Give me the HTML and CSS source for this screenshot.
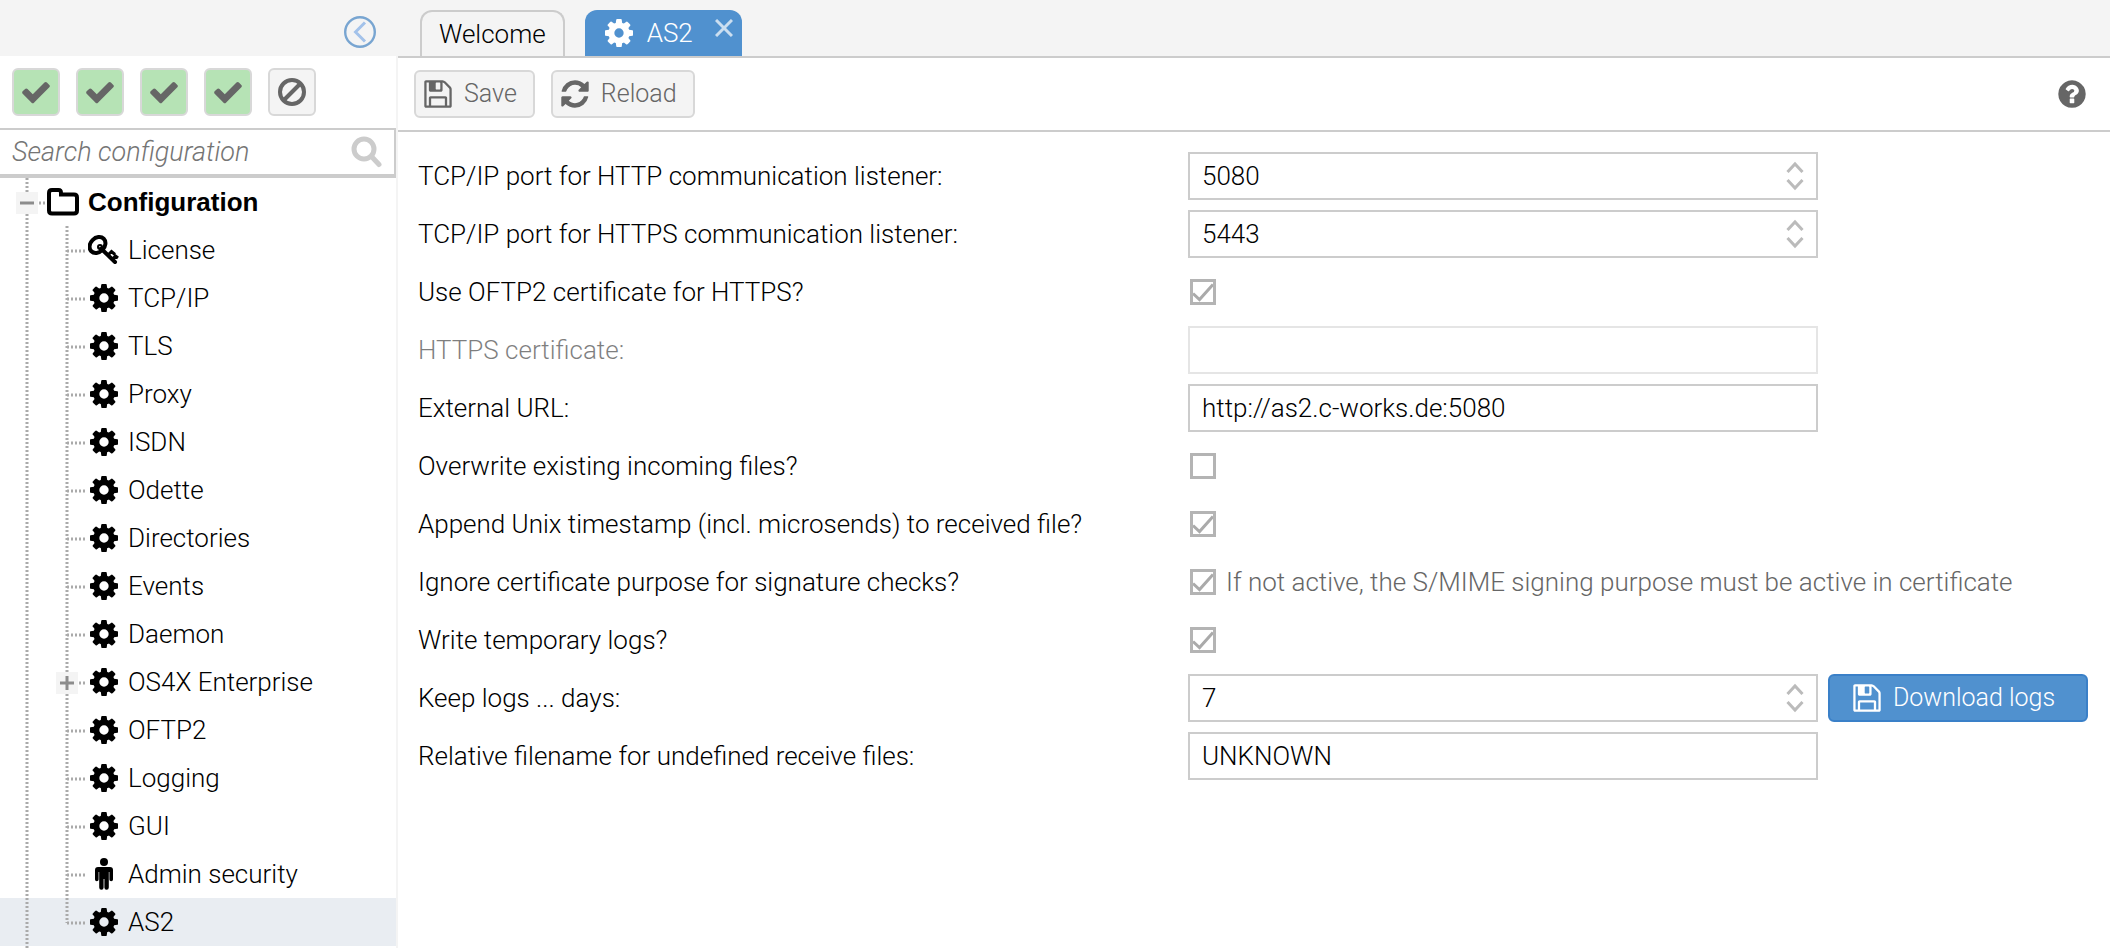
FILE: index.html
```html
<!DOCTYPE html>
<html lang="en">
<head>
<meta charset="utf-8">
<title>Configuration - AS2</title>
<link rel="stylesheet" href="styles.css">
</head>
<body>
<svg class="sprite" aria-hidden="true">
  <symbol id="gear" viewBox="0 -128 1536 1536"><path d="M1024 640q0-106-75-181t-181-75-181 75-75 181 75 181 181 75 181-75 75-181zm512-109v222q0 12-8 23t-20 13l-185 28q-19 54-39 91 35 50 107 138 10 12 10 25t-9 23q-27 37-99 108t-94 71q-12 0-26-9l-138-108q-44 23-91 38-16 136-29 186-7 28-36 28h-222q-14 0-24.500-8.500t-11.500-21.500l-28-184q-49-16-90-37l-141 107q-10 9-25 9-14 0-25-11-126-114-165-168-7-10-7-23 0-12 8-23 15-21 51-66.500t54-70.500q-27-50-41-99l-183-27q-13-2-21-12.500t-8-23.500v-222q0-12 8-23t19-13l186-28q14-46 39-92-40-57-107-138-10-12-10-24 0-10 9-23 26-36 98.500-107.500t94.500-71.500q13 0 26 10l138 107q44-23 91-38 16-136 29-186 7-28 36-28h222q14 0 24.500 8.500t11.500 21.500l28 184q49 16 90 37l142-107q9-9 24-9 13 0 25 10 129 119 165 170 7 8 7 22 0 12-8 23-15 21-51 66.500t-54 70.500q26 50 41 98l183 28q13 2 21 12.500t8 23.500z"/></symbol>
  <symbol id="check" viewBox="0 0 1792 1792"><path d="M1671 566q0 40-28 68l-724 724-136 136q-28 28-68 28t-68-28l-136-136-362-362q-28-28-28-68t28-68l136-136q28-28 68-28t68 28l294 295 656-657q28-28 68-28t68 28l136 136q28 28 28 68z"/></symbol>
  <symbol id="ban" viewBox="0 0 32 32"><g fill="none" stroke="currentColor" stroke-width="4"><circle cx="16" cy="16" r="12"/><path d="M24.500 7.500l-17 17"/></g></symbol>
  <symbol id="refresh" viewBox="0 0 1792 1792"><path d="M1639 1056q0 5-1 7-64 268-268 434.500t-478 166.500q-146 0-282.500-55t-243.500-157l-129 129q-19 19-45 19t-45-19-19-45v-448q0-26 19-45t45-19h448q26 0 45 19t19 45-19 45l-137 137q71 66 161 102t187 36q134 0 250-65t186-179q11-17 53-117 8-23 30-23h192q13 0 22.500 9.500t9.500 22.500zm25-800v448q0 26-19 45t-45 19h-448q-26 0-45-19t-19-45 19-45l138-138q-148-137-349-137-134 0-250 65t-186 179q-11 17-53 117-8 23-30 23h-199q-13 0-22.500-9.500t-9.500-22.500v-7q65-268 270-434.500t480-166.500q146 0 284 55.500t245 156.500l130-129q19-19 45-19t45 19 19 45z"/></symbol>
  <symbol id="floppy" viewBox="0 0 1792 1792"><path d="M512 1536h768v-384h-768v384zm896 0h128v-896q0-14-10-38.500t-20-34.500l-281-281q-10-10-34-20t-39-10v416q0 40-28 68t-68 28h-576q-40 0-68-28t-28-68v-416h-128v1280h128v-416q0-40 28-68t68-28h832q40 0 68 28t28 68v416zm-384-928v-320q0-13-9.500-22.500t-22.500-9.500h-192q-13 0-22.500 9.500t-9.500 22.500v320q0 13 9.500 22.500t22.500 9.500h192q13 0 22.500-9.500t9.500-22.500zm640 32v928q0 40-28 68t-68 28h-1344q-40 0-68-28t-28-68v-1344q0-40 28-68t68-28h928q40 0 88 20t76 48l280 280q28 28 48 76t20 88z"/></symbol>
  <symbol id="help" viewBox="0 0 1792 1792"><path d="M1024 1376v-192q0-14-9-23t-23-9h-192q-14 0-23 9t-9 23v192q0 14 9 23t23 9h192q14 0 23-9t9-23zm256-672q0-88-55.500-163t-138.500-116-170-41q-243 0-371 213-15 24 8 42l132 100q7 6 19 6 16 0 25-12 53-68 86-92 34-24 86-24 48 0 85.500 26t37.500 59q0 38-20 61t-68 45q-63 28-115.500 86.500t-52.500 125.500v36q0 14 9 23t23 9h192q14 0 23-9t9-23q0-19 21.500-49.500t54.500-49.500q32-18 49-28.500t46-35 44.500-48 28-60.500 12.500-81zm384 192q0 209-103 385.500t-279.500 279.500-385.500 103-385.500-103-279.500-279.500-103-385.500 103-385.500 279.500-279.500 385.500-103 385.500 103 279.500 279.500 103 385.500z"/></symbol>
  <symbol id="search" viewBox="0 0 32 32"><g fill="none" stroke="currentColor" stroke-width="5" stroke-linecap="round"><circle cx="14" cy="13" r="10"/><path d="M22 21l7 7.500"/></g></symbol>
  <symbol id="folder" viewBox="0 0 32 28"><path d="M2 5Q2 2 5 2h6.500Q14 2 14 5v1.500h13Q30 6.500 30 9.500v13Q30 25.500 27 25.500H5Q2 25.500 2 22.500z" fill="none" stroke="currentColor" stroke-width="4"/></symbol>
  <symbol id="key" viewBox="2 1 32 32"><g fill="none" stroke="currentColor"><ellipse cx="11.500" cy="12" rx="8.800" ry="7" stroke-width="4" transform="rotate(-45 11.500 12)"/><circle cx="14" cy="14" r="2" stroke-width="2"/><path d="M15 15.500L29 29" stroke-width="4" stroke-linecap="round"/><path d="M22 22l3.500-3.500 3.500 3M26.500 26l3-3 2.500 2" stroke-width="3"/></g></symbol>
  <symbol id="male" viewBox="0 0 32 32"><circle cx="16" cy="4" r="4"/><path d="M10 9h12q3 0 3 3v9.500a1.800 1.800 0 0 1-3.600 0V14h-.6v15.500a2.200 2.200 0 0 1-4.400 0V21h-.8v8.500a2.200 2.200 0 0 1-4.400 0V14h-.6v7.500a1.800 1.800 0 0 1-3.600 0V12q0-3 3-3z"/></symbol>
  <symbol id="collapse" viewBox="0 0 32 32"><g fill="none"><circle cx="16" cy="16" r="14.800" stroke="#78a5d1" stroke-width="2.400"/><path d="M21 6.500L11.500 16l9.500 9.500" stroke="#a3c2ea" stroke-width="3"/></g></symbol>
  <symbol id="close" viewBox="0 0 18 18"><path d="M1 1l16 16M17 1L1 17" stroke="currentColor" stroke-width="3"/></symbol>
  <symbol id="up" viewBox="0 0 18 12"><path d="M1.500 11L9 3l7.500 8" fill="none" stroke="currentColor" stroke-width="3"/></symbol>
  <symbol id="down" viewBox="0 0 18 12"><path d="M1.500 1L9 9l7.500-8" fill="none" stroke="currentColor" stroke-width="3"/></symbol>
  <symbol id="g-line" viewBox="0 0 40 48"><path class="dots" d="M20 0v48"/></symbol>
  <symbol id="g-tee" viewBox="0 0 40 48"><path class="dots" d="M20 0v48M20 25h18"/></symbol>
  <symbol id="g-end" viewBox="0 0 40 48"><path class="dots" d="M20 0v25M20 25h18"/></symbol>
  <symbol id="g-minus" viewBox="0 0 40 48"><path class="dots" d="M20 0v48M20 25h18"/><path d="M9 14h22v22H9z" fill="#f4f4f4"/><path d="M13 25h14" stroke="#8c8c8c" stroke-width="3"/></symbol>
  <symbol id="g-plus" viewBox="0 0 40 48"><path class="dots" d="M20 0v48M20 25h18"/><path d="M9 14h22v22H9z" fill="#f4f4f4"/><path d="M13 25h14M20 18v14" stroke="#8c8c8c" stroke-width="3"/></symbol>
</svg>
<div class="app">
  <aside class="sidebar">
    <header class="side-head"><button class="plain" aria-label="Collapse"><svg class="i32"><use href="#collapse"/></svg></button></header>
    <div class="status">
      <button class="btn square ok" aria-label="Status 1"><svg class="i32"><use href="#check"/></svg></button>
      <button class="btn square ok" aria-label="Status 2"><svg class="i32"><use href="#check"/></svg></button>
      <button class="btn square ok" aria-label="Status 3"><svg class="i32"><use href="#check"/></svg></button>
      <button class="btn square ok" aria-label="Status 4"><svg class="i32"><use href="#check"/></svg></button>
      <button class="btn square" aria-label="Stop"><svg class="i32"><use href="#ban"/></svg></button>
    </div>
    <div class="search"><input type="text" placeholder="Search configuration" aria-label="Search configuration"><svg class="i32"><use href="#search"/></svg></div>
    <nav class="tree">
      <a class="node root" href="#"><svg class="guide"><use href="#g-minus"/></svg><span class="ico"><svg class="fold"><use href="#folder"/></svg></span>Configuration</a>
      <a class="node" href="#"><svg class="guide"><use href="#g-line"/></svg><svg class="guide"><use href="#g-tee"/></svg><span class="ico"><svg class="i32"><use href="#key"/></svg></span>License</a>
      <a class="node" href="#"><svg class="guide"><use href="#g-line"/></svg><svg class="guide"><use href="#g-tee"/></svg><span class="ico"><svg class="i28"><use href="#gear"/></svg></span>TCP/IP</a>
      <a class="node" href="#"><svg class="guide"><use href="#g-line"/></svg><svg class="guide"><use href="#g-tee"/></svg><span class="ico"><svg class="i28"><use href="#gear"/></svg></span>TLS</a>
      <a class="node" href="#"><svg class="guide"><use href="#g-line"/></svg><svg class="guide"><use href="#g-tee"/></svg><span class="ico"><svg class="i28"><use href="#gear"/></svg></span>Proxy</a>
      <a class="node" href="#"><svg class="guide"><use href="#g-line"/></svg><svg class="guide"><use href="#g-tee"/></svg><span class="ico"><svg class="i28"><use href="#gear"/></svg></span>ISDN</a>
      <a class="node" href="#"><svg class="guide"><use href="#g-line"/></svg><svg class="guide"><use href="#g-tee"/></svg><span class="ico"><svg class="i28"><use href="#gear"/></svg></span>Odette</a>
      <a class="node" href="#"><svg class="guide"><use href="#g-line"/></svg><svg class="guide"><use href="#g-tee"/></svg><span class="ico"><svg class="i28"><use href="#gear"/></svg></span>Directories</a>
      <a class="node" href="#"><svg class="guide"><use href="#g-line"/></svg><svg class="guide"><use href="#g-tee"/></svg><span class="ico"><svg class="i28"><use href="#gear"/></svg></span>Events</a>
      <a class="node" href="#"><svg class="guide"><use href="#g-line"/></svg><svg class="guide"><use href="#g-tee"/></svg><span class="ico"><svg class="i28"><use href="#gear"/></svg></span>Daemon</a>
      <a class="node" href="#"><svg class="guide"><use href="#g-line"/></svg><svg class="guide"><use href="#g-plus"/></svg><span class="ico"><svg class="i28"><use href="#gear"/></svg></span>OS4X Enterprise</a>
      <a class="node" href="#"><svg class="guide"><use href="#g-line"/></svg><svg class="guide"><use href="#g-tee"/></svg><span class="ico"><svg class="i28"><use href="#gear"/></svg></span>OFTP2</a>
      <a class="node" href="#"><svg class="guide"><use href="#g-line"/></svg><svg class="guide"><use href="#g-tee"/></svg><span class="ico"><svg class="i28"><use href="#gear"/></svg></span>Logging</a>
      <a class="node" href="#"><svg class="guide"><use href="#g-line"/></svg><svg class="guide"><use href="#g-tee"/></svg><span class="ico"><svg class="i28"><use href="#gear"/></svg></span>GUI</a>
      <a class="node" href="#"><svg class="guide"><use href="#g-line"/></svg><svg class="guide"><use href="#g-tee"/></svg><span class="ico"><svg class="i32"><use href="#male"/></svg></span>Admin security</a>
      <a class="node current" href="#"><svg class="guide"><use href="#g-line"/></svg><svg class="guide"><use href="#g-end"/></svg><span class="ico"><svg class="i28"><use href="#gear"/></svg></span>AS2</a>
      <div class="node"><svg class="guide"><use href="#g-line"/></svg></div>
    </nav>
  </aside>
  <main class="main">
    <div class="tabs">
      <button class="tab">Welcome</button>
      <div class="tab active"><svg class="i28"><use href="#gear"/></svg><span>AS2</span><button class="plain close" aria-label="Close tab"><svg class="i18"><use href="#close"/></svg></button></div>
    </div>
    <div class="toolbar">
      <button class="btn"><svg class="i32"><use href="#floppy"/></svg>Save</button>
      <button class="btn"><svg class="i32"><use href="#refresh"/></svg>Reload</button>
      <button class="plain help" aria-label="Help"><svg class="i32"><use href="#help"/></svg></button>
    </div>
    <form class="form">
      <div class="row"><label for="f1">TCP/IP port for HTTP communication listener:</label><div class="field"><input id="f1" type="number" value="5080"><span class="spin"><button type="button" class="plain" aria-label="Up"><svg><use href="#up"/></svg></button><button type="button" class="plain" aria-label="Down"><svg><use href="#down"/></svg></button></span></div></div>
      <div class="row"><label for="f2">TCP/IP port for HTTPS communication listener:</label><div class="field"><input id="f2" type="number" value="5443"><span class="spin"><button type="button" class="plain" aria-label="Up"><svg><use href="#up"/></svg></button><button type="button" class="plain" aria-label="Down"><svg><use href="#down"/></svg></button></span></div></div>
      <div class="row"><label for="f3">Use OFTP2 certificate for HTTPS?</label><div class="checks"><input id="f3" type="checkbox" checked></div></div>
      <div class="row disabled"><label for="f4">HTTPS certificate:</label><div class="field"><input id="f4" type="text" disabled></div></div>
      <div class="row"><label for="f5">External URL:</label><div class="field"><input id="f5" type="text" value="http://as2.c-works.de:5080"></div></div>
      <div class="row"><label for="f6">Overwrite existing incoming files?</label><div class="checks"><input id="f6" type="checkbox"></div></div>
      <div class="row"><label for="f7">Append Unix timestamp (incl. microsends) to received file?</label><div class="checks"><input id="f7" type="checkbox" checked></div></div>
      <div class="row"><label for="f8">Ignore certificate purpose for signature checks?</label><div class="checks"><input id="f8" type="checkbox" checked><label class="hint" for="f8">If not active, the S/MIME signing purpose must be active in certificate</label></div></div>
      <div class="row"><label for="f9">Write temporary logs?</label><div class="checks"><input id="f9" type="checkbox" checked></div></div>
      <div class="row"><label for="f10">Keep logs ... days:</label><div class="field"><input id="f10" type="number" value="7"><span class="spin"><button type="button" class="plain" aria-label="Up"><svg><use href="#up"/></svg></button><button type="button" class="plain" aria-label="Down"><svg><use href="#down"/></svg></button></span></div><button type="button" class="btn primary"><svg class="i32"><use href="#floppy"/></svg>Download logs</button></div>
      <div class="row"><label for="f11">Relative filename for undefined receive files:</label><div class="field"><input id="f11" type="text" value="UNKNOWN"></div></div>
    </form>
  </main>
</div>
</body>
</html>
```
FILE: styles.css
```css
* { box-sizing: border-box; }
body { margin: 0; background: #fff; color: #000; font: 300 26px/32px Roboto, "Liberation Sans", sans-serif; }
button, input { font: inherit; color: inherit; margin: 0; }
svg { display: block; fill: currentColor; flex: none; }
.sprite { position: absolute; width: 0; height: 0; }
.i18 { width: 18px; height: 18px; }
.i28 { width: 28px; height: 28px; }
.i32 { width: 32px; height: 32px; }
.app { display: flex; height: 100vh; overflow: hidden; }
.sidebar { width: 398px; flex: none; border-right: 2px solid #f4f4f4; display: flex; flex-direction: column; }
.side-head { flex: none; height: 56px; background: #f4f4f4; display: flex; justify-content: flex-end; align-items: flex-end; padding: 0 20px 8px; }
.plain { border: 0; padding: 0; background: none; display: block; }
.status { display: flex; gap: 16px; padding: 12px; }
.btn { height: 48px; border: 2px solid #d8d8d8; border-radius: 6px; background: #f4f4f4; color: #666; display: flex; align-items: center; gap: 10px; padding: 0 16px 0 6px; font-size: 25px; }
.square { width: 48px; padding: 0; justify-content: center; }
.ok { background: #b6e3b5; }
.search { flex: none; height: 50px; border: 2px solid #ccc; border-left: 0; border-bottom-width: 4px; display: flex; align-items: center; padding: 0 12px; color: #ccc; }
.search input { flex: 1; min-width: 0; border: 0; outline: 0; padding: 0; background: none; font-style: italic; font-size: 27px; }
.search input::placeholder { color: #757575; opacity: 1; }
.tree { flex: 1; overflow: hidden; }
.node { height: 48px; padding-left: 7px; display: flex; align-items: center; color: #000; text-decoration: none; white-space: nowrap; }
.root { font-family: "Liberation Sans", Arial, sans-serif; font-weight: 700; }
.current { background: #e9edf2; }
.guide { width: 40px; height: 48px; }
.dots { fill: none; stroke: #aaa; stroke-width: 3; stroke-dasharray: 2 2; }
.ico { width: 41px; padding-right: 7px; display: flex; justify-content: center; }
.root .ico { justify-content: flex-start; }
.fold { width: 32px; height: 28px; }
.main { flex: 1; min-width: 0; display: flex; flex-direction: column; }
.tabs { flex: none; height: 58px; background: #f4f4f4; border-bottom: 2px solid #ccc; display: flex; align-items: flex-end; gap: 20px; padding-left: 22px; }
.tab { height: 46px; border: 2px solid #ccc; border-bottom: 0; border-radius: 12px 12px 0 0; background: #f4f4f4; padding: 0 17px; display: flex; align-items: center; }
.active { background: #5091cf; border: 0; color: #fff; padding: 0 9px 0 20px; gap: 14px; }
.close { align-self: flex-start; margin-top: 9px; margin-left: 8px; opacity: .7; }
.toolbar { flex: none; height: 74px; border-bottom: 2px solid #ccc; display: flex; align-items: center; gap: 16px; padding: 0 22px 0 16px; }
.help { margin-left: auto; color: #666; }
.form { display: grid; gap: 10px; padding: 20px 22px 20px 20px; }
.row { height: 48px; display: grid; grid-template-columns: 760px minmax(0, 1fr) 260px; column-gap: 10px; align-items: center; white-space: nowrap; }
.disabled { opacity: .5; }
.field { height: 48px; border: 2px solid #ccc; display: flex; align-items: center; padding: 0 12px; }
.field input { flex: 1; min-width: 0; border: 0; outline: 0; padding: 0; background: none; appearance: textfield; }
.field input::-webkit-inner-spin-button { appearance: none; margin: 0; }
.spin { display: grid; gap: 6px; color: #bbb; }
.spin svg { width: 18px; height: 12px; }
.checks { grid-column: 2 / 4; display: flex; align-items: center; gap: 10px; padding-left: 2px; }
.checks input { appearance: none; width: 26px; height: 26px; border: 3px solid #b4b4b4; flex: none; }
.checks input:checked { background: url("data:image/svg+xml,%3Csvg xmlns='http://www.w3.org/2000/svg' viewBox='0 0 20 20'%3E%3Cpath d='M0 11.500l6.500 6L20 2.500' fill='none' stroke='%23aaa' stroke-width='3'/%3E%3C/svg%3E"); }
.hint { color: #666; }
.primary { border-color: #3a80c8; background: #5091cf; color: #fff; justify-content: center; }
```
